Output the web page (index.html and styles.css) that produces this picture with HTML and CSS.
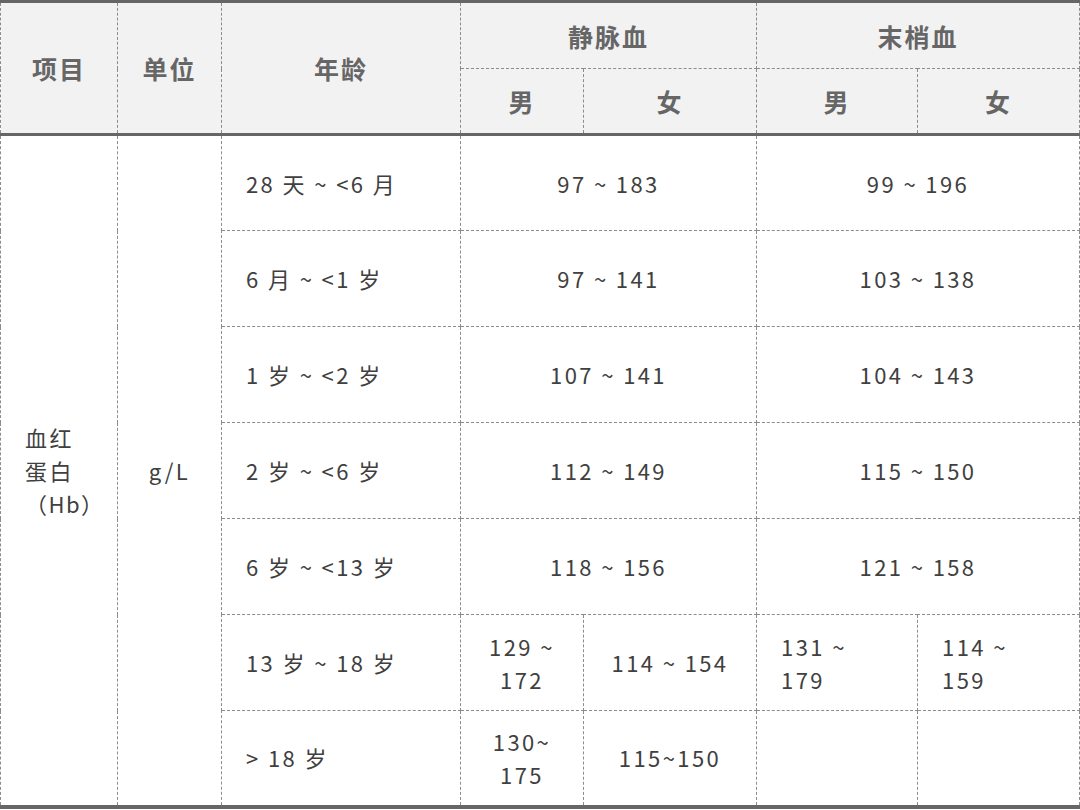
FILE: index.html
```html
<!DOCTYPE html>
<html lang="zh-CN">
<head>
<meta charset="utf-8">
<title>血红蛋白参考区间</title>
<link rel="stylesheet" href="styles.css">
</head>
<body>
<table class="ref">
  <colgroup>
    <col class="c1"><col class="c2"><col class="c3"><col class="c4"><col class="c5"><col class="c6"><col class="c7">
  </colgroup>
  <thead>
    <tr class="h1">
      <th rowspan="2">项目</th>
      <th rowspan="2">单位</th>
      <th rowspan="2">年龄</th>
      <th colspan="2">静脉血</th>
      <th colspan="2">末梢血</th>
    </tr>
    <tr class="h2">
      <th>男</th><th>女</th><th>男</th><th>女</th>
    </tr>
  </thead>
  <tbody>
    <tr>
      <td rowspan="7" class="item">血红蛋白<span class="nw">（Hb）</span></td>
      <td rowspan="7" class="unit">g/L</td>
      <td class="age">28 天 ~ &lt;6 月</td>
      <td colspan="2" class="val">97 ~ 183</td>
      <td colspan="2" class="val">99 ~ 196</td>
    </tr>
    <tr>
      <td class="age">6 月 ~ &lt;1 岁</td>
      <td colspan="2" class="val">97 ~ 141</td>
      <td colspan="2" class="val">103 ~ 138</td>
    </tr>
    <tr>
      <td class="age">1 岁 ~ &lt;2 岁</td>
      <td colspan="2" class="val">107 ~ 141</td>
      <td colspan="2" class="val">104 ~ 143</td>
    </tr>
    <tr>
      <td class="age">2 岁 ~ &lt;6 岁</td>
      <td colspan="2" class="val">112 ~ 149</td>
      <td colspan="2" class="val">115 ~ 150</td>
    </tr>
    <tr>
      <td class="age">6 岁 ~ &lt;13 岁</td>
      <td colspan="2" class="val">118 ~ 156</td>
      <td colspan="2" class="val">121 ~ 158</td>
    </tr>
    <tr>
      <td class="age">13 岁 ~ 18 岁</td>
      <td class="val">129 ~ 172</td>
      <td class="val">114 ~ 154</td>
      <td class="val left">131 ~ 179</td>
      <td class="val left">114 ~ 159</td>
    </tr>
    <tr class="last">
      <td class="age">&gt; 18 岁</td>
      <td class="val">130~ 175</td>
      <td class="val">115~150</td>
      <td class="val"></td>
      <td class="val"></td>
    </tr>
  </tbody>
</table>
</body>
</html>
```
FILE: styles.css
```css
html, body {
  margin: 0;
  padding: 0;
  background: #ffffff;
}

body {
  font-family: "Noto Sans CJK SC", "Noto Sans", sans-serif;
  color: #404040;
}

.ref {
  border-collapse: collapse;
  table-layout: fixed;
  width: 1079px;
  border-top: 3px solid #666666;
  border-bottom: 4px solid #666666;
}

.c1 { width: 117px; }
.c2 { width: 104px; }
.c3 { width: 239px; }
.c4 { width: 123px; }
.c5 { width: 173px; }
.c6 { width: 161px; }
.c7 { width: 162px; }

.ref th,
.ref td {
  border: 1px dashed #8c8c8c;
  padding: 0 24px;
  vertical-align: middle;
}

.ref th {
  background: #f2f2f2;
  color: #666666;
  font-size: 25px;
  font-weight: 700;
  letter-spacing: 2px;
  text-align: center;
}

.ref thead tr:first-child th {
  border-top: none;
}

.h1 th { height: 65px; }
.h2 th { height: 64px; }

.ref thead .h2 th,
.ref thead th[rowspan] {
  border-bottom: 3px solid #666666;
}

.ref td {
  font-size: 22px;
  line-height: 33px;
  letter-spacing: 2.4px;
  height: 96px;
  box-sizing: border-box;
}

.ref tr.last td {
  border-bottom: none;
}

.item {
  text-align: left;
  word-break: break-all;
}

.nw {
  white-space: nowrap;
  letter-spacing: 1.5px;
}

.unit {
  text-align: center;
  padding: 0 8px;
}

.age {
  text-align: left;
}

.val {
  text-align: center;
}

.val.left {
  text-align: left;
}
```
